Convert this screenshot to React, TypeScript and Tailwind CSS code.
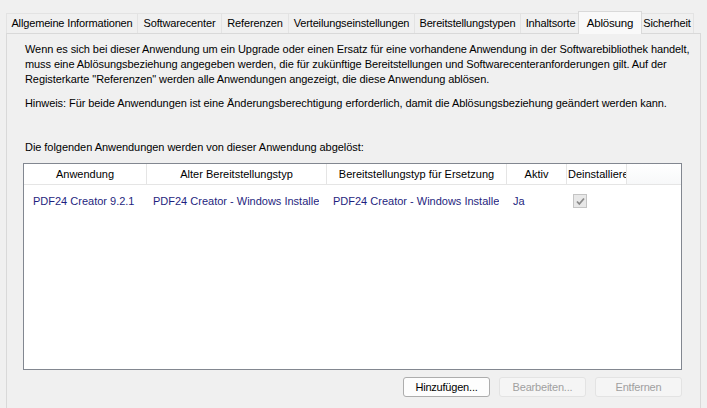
import React from "react";

const tabs = [
  { label: "Allgemeine Informationen", w: 131 },
  { label: "Softwarecenter", w: 84 },
  { label: "Referenzen", w: 67 },
  { label: "Verteilungseinstellungen", w: 126 },
  { label: "Bereitstellungstypen", w: 106 },
  { label: "Inhaltsorte", w: 60 },
  { label: "Ablösung", w: 60, active: true },
  { label: "Sicherheit", w: 54 },
];

const cols = [
  { label: "Anwendung", w: 123, align: "center" },
  { label: "Alter Bereitstellungstyp", w: 180, align: "center" },
  { label: "Bereitstellungstyp für Ersetzung", w: 180, align: "center" },
  { label: "Aktiv", w: 60, align: "center" },
  { label: "Deinstallieren", w: 60, align: "left" },
];

export default function App() {
  return (
    <div
      className="w-[707px] h-[408px] bg-[#f0f0f0] overflow-hidden text-black"
      style={{ fontFamily: '"Liberation Sans", Arial, sans-serif' }}
    >
      {/* tab strip */}
      <div className="flex items-end h-[33px] pl-[6px]">
        {tabs.map((t, i) =>
          t.active ? (
            <div
              key={t.label}
              className="h-[23px] -mb-px -mx-[2px] relative z-10 flex items-start justify-center pt-[3px] bg-[#f9f9f9] border border-b-0 border-[#d9d9d9] text-[11.5px] tracking-[-0.2px] whitespace-nowrap"
              style={{ width: t.w + 4 }}
            >
              {t.label}
            </div>
          ) : (
            <div
              key={t.label}
              className={`h-[20px] flex items-center justify-center border-t border-l border-[#e3e3e3] bg-[#f0f0f0] text-[11px] tracking-[-0.15px] whitespace-nowrap ${
                i === tabs.length - 1 ? "border-r" : ""
              }`}
              style={{ width: t.w }}
            >
              {t.label}
            </div>
          )
        )}
      </div>

      {/* tab page */}
      <div className="ml-[6px] w-[695px] h-[400px] border border-[#d9d9d9] bg-[#f0f0f0] pl-[16px] pt-[8px]">
        <p className="ml-[2px] text-[11px] leading-[15px] tracking-[-0.08px] whitespace-nowrap">
          Wenn es sich bei dieser Anwendung um ein Upgrade oder einen Ersatz für eine vorhandene Anwendung in der Softwarebibliothek handelt,
          <br />
          muss eine Ablösungsbeziehung angegeben werden, die für zukünftige Bereitstellungen und Softwarecenteranforderungen gilt. Auf der
          <br />
          Registerkarte "Referenzen" werden alle Anwendungen angezeigt, die diese Anwendung ablösen.
        </p>
        <p className="ml-[2px] mt-[9px] text-[11px] leading-[15px] tracking-[-0.07px] whitespace-nowrap">
          Hinweis: Für beide Anwendungen ist eine Änderungsberechtigung erforderlich, damit die Ablösungsbeziehung geändert werden kann.
        </p>
        <p className="ml-[2px] mt-[29px] text-[11px] leading-[15px] tracking-[-0.05px] whitespace-nowrap">
          Die folgenden Anwendungen werden von dieser Anwendung abgelöst:
        </p>

        {/* list view */}
        <div className="mt-[8px] w-[659px] h-[207px] border border-[#828790] bg-white text-[11px]">
          <div className="flex h-[21px] border-b border-[#e5e5e5] bg-gradient-to-b from-white to-[#f7f8f9]">
            {cols.map((c) => (
              <div
                key={c.label}
                className={`h-full flex items-center border-r border-[#e5e5e5] overflow-hidden whitespace-nowrap bg-white ${
                  c.align === "center" ? "justify-center" : "justify-start pl-[1px]"
                }`}
                style={{ width: c.w }}
              >
                {c.label}
              </div>
            ))}
            <div className="flex-1" />
          </div>
          <div className="flex h-[32px] items-center text-[#1f1f80]">
            <div className="w-[123px] pl-[9px] whitespace-nowrap overflow-hidden">PDF24 Creator 9.2.1</div>
            <div className="w-[180px] pl-[6px] pr-[8px]">
              <div className="whitespace-nowrap overflow-hidden">PDF24 Creator - Windows Installer</div>
            </div>
            <div className="w-[180px] pl-[6px] pr-[8px]">
              <div className="whitespace-nowrap overflow-hidden">PDF24 Creator - Windows Installer</div>
            </div>
            <div className="w-[60px] pl-[6px] whitespace-nowrap">Ja</div>
            <div className="w-[60px] pl-[6px] flex items-center">
              <div className="w-[14px] h-[14px] border border-[#c4c4c4] bg-[#e8e8e8] flex items-center justify-center">
                <svg width="11" height="11" viewBox="0 0 11 11">
                  <path d="M2 5.5 L4.3 8 L9 2.5" fill="none" stroke="#8a8a8a" strokeWidth="1.8" />
                </svg>
              </div>
            </div>
          </div>
        </div>

        {/* buttons */}
        <div className="mt-[7px] w-[659px] flex justify-end gap-[9px] text-[11px] tracking-[-0.2px]">
          <button className="w-[87px] h-[20px] rounded-[3px] border border-[#adadad] bg-[#fdfdfd] text-black">
            Hinzufügen...
          </button>
          <button className="w-[87px] h-[20px] rounded-[3px] border border-[#e3e3e3] bg-[#f5f5f5] text-[#a0a0a0]">
            Bearbeiten...
          </button>
          <button className="w-[87px] h-[20px] rounded-[3px] border border-[#e3e3e3] bg-[#f5f5f5] text-[#a0a0a0]">
            Entfernen
          </button>
        </div>
      </div>
    </div>
  );
}
